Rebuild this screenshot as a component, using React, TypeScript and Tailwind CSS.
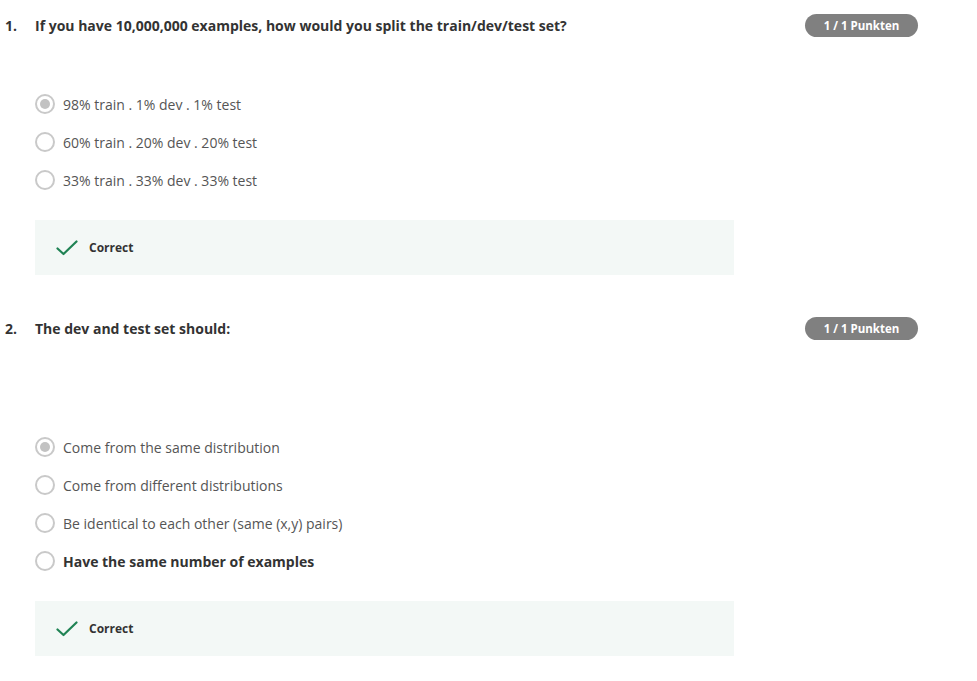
import React from "react";

type Opt = { text: string; selected?: boolean; bold?: boolean };

function Radio({ selected }: { selected?: boolean }) {
  return (
    <span className="flex h-[20px] w-[20px] shrink-0 items-center justify-center rounded-full border-2 border-[#c9c9c9] bg-white">
      {selected && <span className="h-[10px] w-[10px] rounded-full bg-[#c2c2c2]" />}
    </span>
  );
}

function Badge() {
  return (
    <span className="flex h-[23px] w-[113px] items-center justify-center rounded-full bg-[#808080] text-[11.5px] font-bold text-white">
      1 / 1 Punkten
    </span>
  );
}

function Correct() {
  return (
    <div className="flex h-[55px] w-[699px] items-center bg-[#f3f8f6] pl-[21px]">
      <svg width="22" height="16" viewBox="0 0 22 16" className="mr-[11px]">
        <path d="M1.5 8.5 L7.5 14 L20.5 1.5" fill="none" stroke="#1f8354" strokeWidth="2.2" strokeLinecap="round" strokeLinejoin="round" />
      </svg>
      <span className="text-[12px] font-bold text-[#333]">Correct</span>
    </div>
  );
}

function Question({ n, title, options, optTop }: { n: string; title: string; options: Opt[]; optTop: string }) {
  return (
    <div>
      <div className="flex h-[23px] items-center pr-[59px]">
        <span className="w-[35px] pl-[5px] text-[14px] font-bold text-[#333]">{n}</span>
        <span className="flex-1 text-[14px] font-bold text-[#333]">{title}</span>
        <Badge />
      </div>
      <div className={`${optTop} pl-[35px]`}>
        {options.map((o, i) => (
          <div key={i} className="flex h-[38px] items-center">
            <Radio selected={o.selected} />
            <span className={`ml-[8px] text-[14px] ${o.bold ? "font-bold text-[#333]" : "text-[#555]"}`}>{o.text}</span>
          </div>
        ))}
        <div className="mt-[21px]">
          <Correct />
        </div>
      </div>
    </div>
  );
}

export default function App() {
  return (
    <div className="min-h-[681px] w-[977px] bg-white pt-[14px]" style={{ fontFamily: '"Open Sans", sans-serif' }}>
      <Question
        n="1."
        title="If you have 10,000,000 examples, how would you split the train/dev/test set?"
        optTop="mt-[48px]"
        options={[
          { text: "98% train . 1% dev . 1% test", selected: true },
          { text: "60% train . 20% dev . 20% test" },
          { text: "33% train . 33% dev . 33% test" },
        ]}
      />
      <div className="mt-[42px]">
        <Question
          n="2."
          title="The dev and test set should:"
          optTop="mt-[88px]"
          options={[
            { text: "Come from the same distribution", selected: true },
            { text: "Come from different distributions" },
            { text: "Be identical to each other (same (x,y) pairs)" },
            { text: "Have the same number of examples", bold: true },
          ]}
        />
      </div>
    </div>
  );
}
